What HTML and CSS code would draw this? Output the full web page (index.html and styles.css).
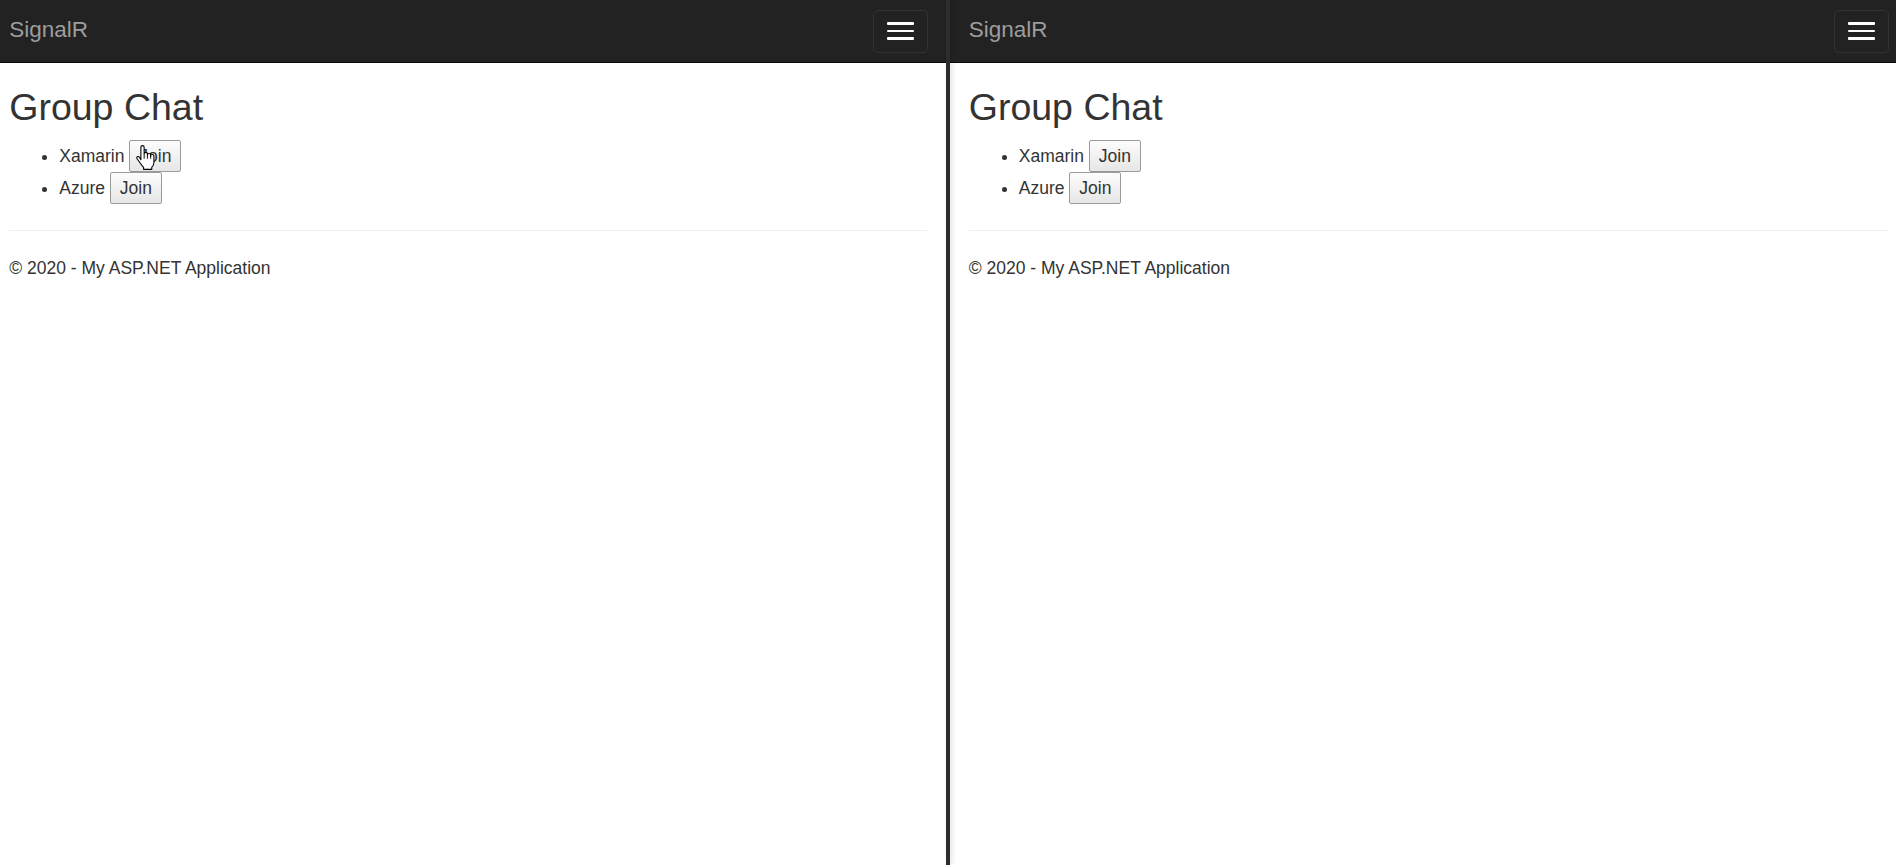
FILE: index.html
```html
<!DOCTYPE html>
<html lang="en">
<head>
<meta charset="utf-8">
<title>Group Chat - SignalR</title>
<link rel="stylesheet" href="styles.css">
</head>
<body>
<div class="screen">
  <div class="window window-left">
    <nav class="navbar">
      <span class="brand">SignalR</span>
      <button class="toggle" type="button" aria-label="Toggle navigation">
        <span class="bar"></span><span class="bar"></span><span class="bar"></span>
      </button>
    </nav>
    <main class="content">
      <h2 class="title">Group Chat</h2>
      <ul class="groups">
        <li>Xamarin <button class="join" type="button">Join</button></li>
        <li>Azure <button class="join" type="button">Join</button></li>
      </ul>
      <hr class="rule">
      <footer class="footer"><p>© 2020 - My ASP.NET Application</p></footer>
    </main>
    <svg class="cursor" width="19" height="25" viewBox="0 0 17.5 22.8" aria-hidden="true">
      <path d="M6,0.5c0.9,0 1.5,0.6 1.5,1.5V8c0-0.8 0.6-1.3 1.5-1.3s1.5,0.5 1.5,1.3V9c0-0.8 0.6-1.3 1.5-1.3s1.5,0.5 1.5,1.3V10c0-0.8 0.6-1.3 1.5-1.3s1.5,0.5 1.5,1.3V16c0,2-1,3.5-2,4.5V22.3H7V20.5c-1-1-2.5-3-3.5-4.5L1,12.5c-0.6-0.8-0.3-1.8 0.5-2c0.7-0.2 1.3,0.2 1.8,0.8L4.5,13.5V2c0-0.9 0.6-1.5 1.5-1.5Z" fill="#fff" stroke="#000" stroke-width="1" stroke-linejoin="round"/>
      <path d="M7.5,8V12.5M10.5,9V12.5M13.5,10V12.5" fill="none" stroke="#000" stroke-width="0.9"/>
    </svg>
  </div>
  <div class="divider"></div>
  <div class="window window-right">
    <nav class="navbar">
      <span class="brand">SignalR</span>
      <button class="toggle" type="button" aria-label="Toggle navigation">
        <span class="bar"></span><span class="bar"></span><span class="bar"></span>
      </button>
    </nav>
    <main class="content">
      <h2 class="title">Group Chat</h2>
      <ul class="groups">
        <li>Xamarin <button class="join" type="button">Join</button></li>
        <li>Azure <button class="join" type="button">Join</button></li>
      </ul>
      <hr class="rule">
      <footer class="footer"><p>© 2020 - My ASP.NET Application</p></footer>
    </main>
  </div>
</div>
</body>
</html>
```
FILE: styles.css
```css
html, body {
  margin: 0;
  padding: 0;
  background: #fff;
}

body {
  font-family: "Liberation Sans", Arial, Helvetica, sans-serif;
  font-size: 17.5px;
  line-height: 25px;
  color: #333;
  overflow: hidden;
}

.screen {
  display: flex;
  height: 865px;
  overflow: hidden;
}

.window {
  position: relative;
  overflow: hidden;
  height: 865px;
  background: #fff;
}

.window-left {
  flex: 0 0 955.5px;
  margin-left: -9.5px;
}

.window-right {
  flex: 0 0 957px;
}

.divider {
  flex: 0 0 4px;
  background: #2d2d2d;
  box-shadow: 2px 0 5px rgba(0, 0, 0, 0.13);
  position: relative;
  z-index: 2;
}

.navbar {
  height: 62px;
  background: #222;
  border-bottom: 1px solid #080808;
  display: flex;
  justify-content: space-between;
  align-items: flex-start;
  padding: 0 18px 0 18.75px;
}

.brand {
  font-size: 22.5px;
  line-height: 25px;
  color: #9d9d9d;
  padding-top: 16.5px;
}

.toggle {
  margin: 9.5px 0 0;
  width: 55px;
  height: 43px;
  padding: 0;
  box-sizing: border-box;
  background: transparent;
  border: 1px solid #333;
  border-radius: 5px;
  display: flex;
  flex-direction: column;
  justify-content: center;
  align-items: center;
  gap: 5px;
}

.bar {
  display: block;
  width: 27.5px;
  height: 2.5px;
  background: #fff;
  border-radius: 1px;
}

.content {
  padding: 0 18.75px;
}

.title {
  font-size: 37.5px;
  font-weight: normal;
  line-height: 41.25px;
  margin: 23.5px 0 12.5px;
  color: #333;
}

.groups {
  margin: 0 0 12.5px;
  padding-left: 50px;
}

.groups li {
  line-height: 25px;
}

.join {
  font: inherit;
  line-height: 25px;
  color: #333;
  padding: 2.5px 9px;
  margin: 0;
  border: 1px solid #9a9a9a;
  border-radius: 2px;
  background: linear-gradient(#fdfdfd, #e6e6e6);
  vertical-align: baseline;
}

.rule {
  border: 0;
  border-top: 1px solid #eee;
  margin: 25.5px 0 25px;
  height: 0;
}

.footer p {
  margin: 0 0 12.5px;
}

.cursor {
  position: absolute;
  left: 145.5px;
  top: 144.5px;
}
```
